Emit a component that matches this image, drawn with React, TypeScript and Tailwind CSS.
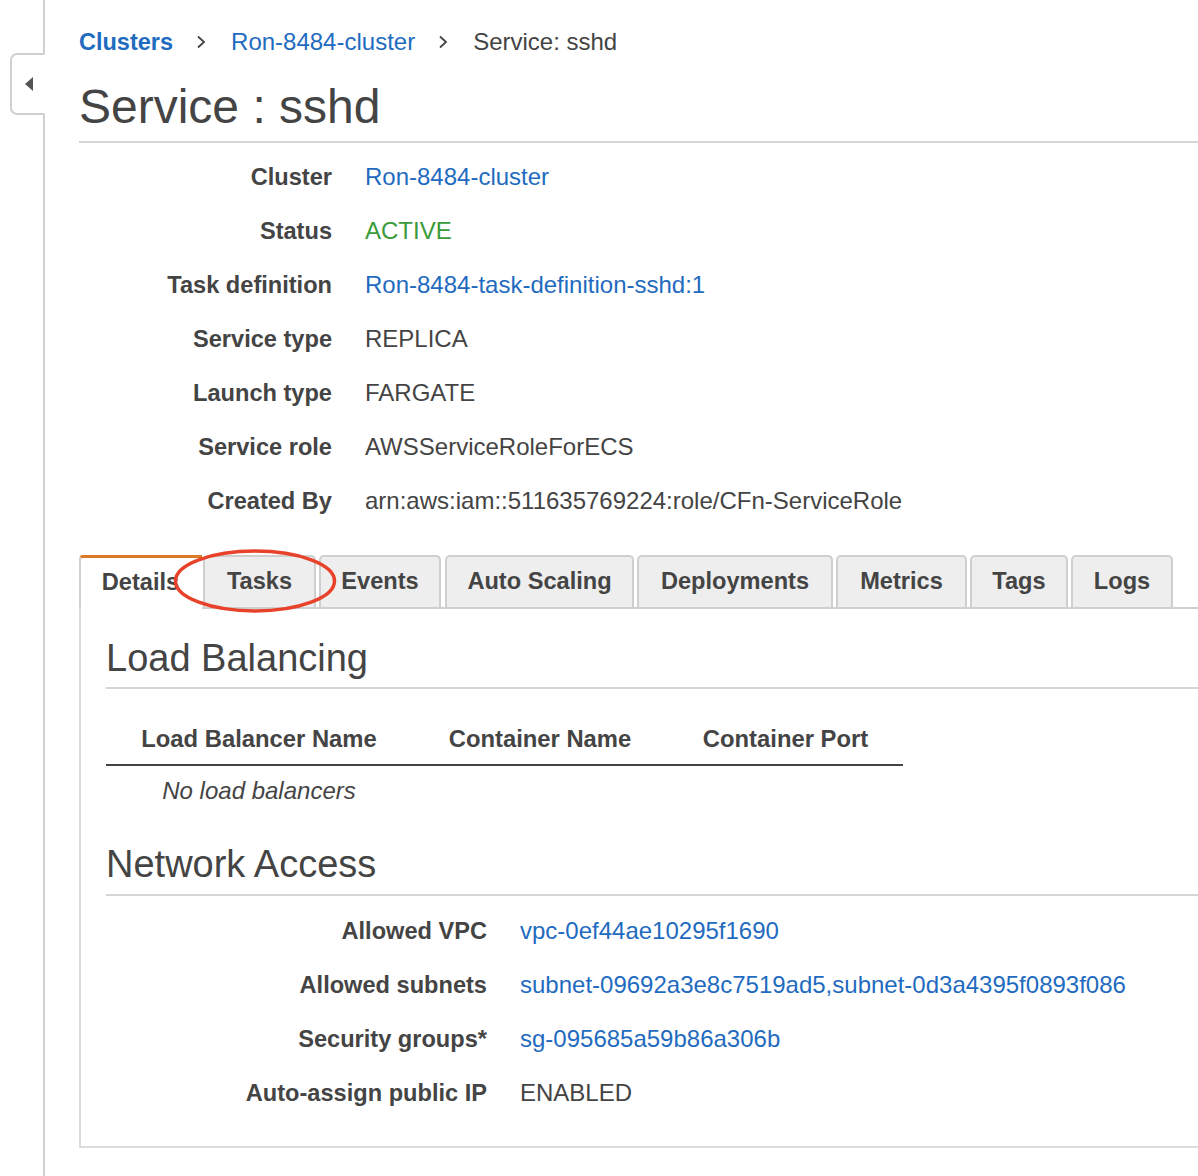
import React from "react";

const FONT = { fontFamily: '"Liberation Sans", Arial, Helvetica, sans-serif' };

function Chevron() {
  return (
    <svg width="10" height="14" viewBox="0 0 10 14" className="ml-[23px] mr-[25px]">
      <polyline points="2,1.5 8,7 2,12.5" fill="none" stroke="#444" strokeWidth="1.8" />
    </svg>
  );
}

const kv1: { label: string; value: string; kind: "link" | "green" | "text" }[] = [
  { label: "Cluster", value: "Ron-8484-cluster", kind: "link" },
  { label: "Status", value: "ACTIVE", kind: "green" },
  { label: "Task definition", value: "Ron-8484-task-definition-sshd:1", kind: "link" },
  { label: "Service type", value: "REPLICA", kind: "text" },
  { label: "Launch type", value: "FARGATE", kind: "text" },
  { label: "Service role", value: "AWSServiceRoleForECS", kind: "text" },
  { label: "Created By", value: "arn:aws:iam::511635769224:role/CFn-ServiceRole", kind: "text" },
];

const kv2: { label: string; value: string; kind: "link" | "green" | "text" }[] = [
  { label: "Allowed VPC", value: "vpc-0ef44ae10295f1690", kind: "link" },
  { label: "Allowed subnets", value: "subnet-09692a3e8c7519ad5,subnet-0d3a4395f0893f086", kind: "link" },
  { label: "Security groups*", value: "sg-095685a59b86a306b", kind: "link" },
  { label: "Auto-assign public IP", value: "ENABLED", kind: "text" },
];

function valueClass(kind: string) {
  if (kind === "link") return "text-[#1f6bc0]";
  if (kind === "green") return "text-[#3b9a3b]";
  return "text-[#444]";
}

const tabs: { label: string; cls: string }[] = [
  { label: "Tasks", cls: "w-[113px] ml-[1px]" },
  { label: "Events", cls: "w-[122px] ml-[3px]" },
  { label: "Auto Scaling", cls: "w-[189px] ml-[4px]" },
  { label: "Deployments", cls: "w-[196px] ml-[3px]" },
  { label: "Metrics", cls: "w-[131px] ml-[3px]" },
  { label: "Tags", cls: "w-[98px] ml-[3px]" },
  { label: "Logs", cls: "w-[102px] ml-[3px]" },
];

export default function App() {
  return (
    <div className="flex min-h-[1176px] w-[1198px] overflow-hidden bg-white text-[#444]" style={FONT}>
      {/* left collapse rail */}
      <div className="flex w-[45px] shrink-0 flex-col">
        <div className="h-[53px] border-r-2 border-[#d0d0d0]" />
        <div className="ml-[10px] flex h-[62px] items-center rounded-l-[7px] border-y-2 border-l-2 border-[#d0d0d0] bg-white pl-[12px]">
          <svg width="10" height="16" viewBox="0 0 10 16">
            <polygon points="1,8 9,1 9,15" fill="#555" />
          </svg>
        </div>
        <div className="flex-1 border-r-2 border-[#d0d0d0]" />
      </div>

      {/* main */}
      <div className="ml-[34px] flex min-w-[1119px] flex-col">
        {/* breadcrumb */}
        <div className="mt-[28px] flex h-[28px] items-center text-[24px] leading-[28px]">
          <span className="text-[23.5px] font-bold text-[#1f6bc0]">Clusters</span>
          <Chevron />
          <span className="text-[#1f6bc0]">Ron-8484-cluster</span>
          <Chevron />
          <span className="text-[#444]">Service: sshd</span>
        </div>

        {/* title */}
        <div className="mt-[22px] border-b-2 border-[#d5d5d5] pb-[5px] text-[48px] leading-[58px] text-[#444]">
          Service : sshd
        </div>

        {/* summary */}
        <div className="mt-[8px] grid grid-cols-[253px_1fr] gap-x-[33px]">
          {kv1.map((r) => (
            <React.Fragment key={r.label}>
              <div className="flex h-[54px] items-center justify-end text-[23.6px] font-bold">{r.label}</div>
              <div className={"flex h-[54px] items-center whitespace-nowrap pb-[2px] text-[24px] " + valueClass(r.kind)}>
                {r.value}
              </div>
            </React.Fragment>
          ))}
        </div>

        {/* tabs */}
        <div className="relative mt-[26px] flex h-[54px] items-end border-b-2 border-[#cfcfcf] text-[23.6px] font-bold">
          <div className="relative z-10 -mb-[2px] flex h-[54px] w-[123px] items-center justify-center rounded-tl-[4px] border-t-[3px] border-l-2 border-[#d0d0d0] border-t-[#dc7b27] bg-white pb-[2px] pr-[2px]">
            Details
          </div>
          {tabs.map((t) => (
            <div
              key={t.label}
              className={
                "flex h-[52px] items-center justify-center rounded-t-[5px] border-x-2 border-t-2 border-[#cfcfcf] bg-[#eeeeee] " +
                t.cls
              }
            >
              {t.label}
            </div>
          ))}
          <svg
            className="pointer-events-none absolute left-[92px] top-[-8px] z-20"
            width="170"
            height="68"
            viewBox="0 0 170 68"
          >
            <ellipse cx="84" cy="34" rx="79.5" ry="30" fill="none" stroke="#e8432a" strokeWidth="3.5" />
          </svg>
        </div>

        {/* panel */}
        <div className="border-b-2 border-l-2 border-[#dcdcdc] pb-[25px] pl-[25px]">
          <div className="mt-[27px] border-b-2 border-[#d5d5d5] pb-[7px] text-[38px] leading-[44px]">
            Load Balancing
          </div>

          <table className="mt-[25px] border-collapse">
            <thead>
              <tr className="h-[51px] border-b-2 border-[#444] text-[23.8px]">
                <th className="w-[306px] p-0 text-center font-bold">Load Balancer Name</th>
                <th className="w-[256px] p-0 text-center font-bold">Container Name</th>
                <th className="w-[235px] p-0 text-center font-bold">Container Port</th>
              </tr>
            </thead>
            <tbody>
              <tr className="h-[51px] text-[24px]">
                <td className="p-0 text-center italic">No load balancers</td>
                <td />
                <td />
              </tr>
            </tbody>
          </table>

          <div className="mt-[26px] border-b-2 border-[#d5d5d5] pb-[8px] text-[38px] leading-[44px]">
            Network Access
          </div>

          <div className="mt-[9px] grid grid-cols-[381px_1fr] gap-x-[33px]">
            {kv2.map((r) => (
              <React.Fragment key={r.label}>
                <div className="flex h-[54px] items-center justify-end text-[23.6px] font-bold">{r.label}</div>
                <div className={"flex h-[54px] items-center whitespace-nowrap pb-[2px] text-[24px] " + valueClass(r.kind)}>
                  {r.value}
                </div>
              </React.Fragment>
            ))}
          </div>
        </div>
      </div>
    </div>
  );
}
